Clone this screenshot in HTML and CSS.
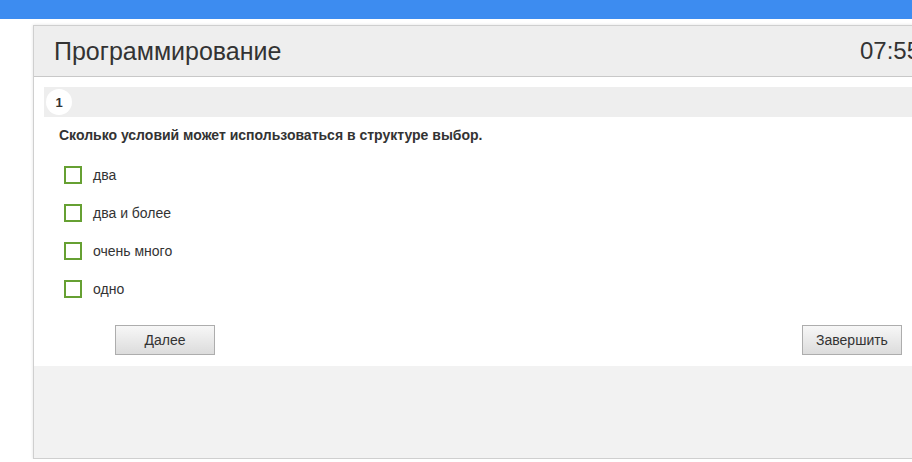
FILE: index.html
```html
<!DOCTYPE html>
<html lang="ru">
<head>
  <meta charset="UTF-8" />
  <title>Программирование</title>
  <link rel="stylesheet" href="styles.css">
</head>
<body>
  <div class="topbar"></div>
  <div class="page">
    <div class="panel">
      <div class="panel-head">
        <h1 class="title">Программирование</h1>
        <span class="timer">07:55</span>
      </div>
      <div class="panel-body">
        <div class="qnum"><span class="qnum-circle">1</span></div>
        <p class="question">Сколько условий может использоваться в структуре выбор.</p>
        <ul class="options">
          <li class="option"><span class="check"></span><span class="label">два</span></li>
          <li class="option"><span class="check"></span><span class="label">два и более</span></li>
          <li class="option"><span class="check"></span><span class="label">очень много</span></li>
          <li class="option"><span class="check"></span><span class="label">одно</span></li>
        </ul>
        <div class="actions">
          <button class="btn">Далее</button>
          <button class="btn btn-finish">Завершить</button>
        </div>
      </div>
      <div class="panel-foot"></div>
    </div>
  </div>
</body>
</html>
```

FILE: styles.css
```css
* {
  box-sizing: border-box;
}
body {
  margin: 0;
  font-family: 'Liberation Sans', Arial, sans-serif;
  color: #333;
  background: #fff;
  overflow: hidden;
}
.topbar {
  height: 19px;
  background: #3d8cf0;
}
.page {
  padding: 6px 0 0 33px;
}
.panel {
  width: 908px;
  border: 1px solid #cfcfcf;
  box-shadow: 0 0 3px rgba(0, 0, 0, 0.12);
  background: #fff;
}
.panel-head {
  height: 51px;
  background: #eee;
  border-bottom: 1px solid #c8c8c8;
  display: flex;
  align-items: center;
  justify-content: space-between;
  padding: 0 20px 0 20px;
}
.title {
  margin: 0;
  font-size: 25px;
  font-weight: normal;
  color: #333;
}
.timer {
  font-size: 24px;
  color: #333;
}
.panel-body {
  padding: 10px 0 11px 10px;
}
.qnum {
  height: 30px;
  background: #eee;
  display: flex;
  align-items: center;
  padding-left: 2px;
}
.qnum-circle {
  width: 26px;
  height: 26px;
  border-radius: 50%;
  background: #fff;
  display: flex;
  align-items: center;
  justify-content: center;
  font-size: 13px;
  font-weight: bold;
  color: #333;
}
.question {
  margin: 9px 0 0 15px;
  font-size: 14px;
  line-height: 18px;
  font-weight: bold;
}
.options {
  list-style: none;
  margin: 12px 0 0 0;
  padding: 0;
}
.option {
  height: 38px;
  display: flex;
  align-items: center;
  padding-left: 20px;
}
.check {
  width: 18px;
  height: 18px;
  border: 2px solid #66a032;
  background: #fff;
}
.label {
  margin-left: 11px;
  font-size: 14px;
}
.actions {
  display: flex;
  justify-content: space-between;
  margin-top: 17px;
  padding: 0 38px 0 71px;
}
.btn {
  width: 100px;
  height: 30px;
  border: 1px solid #adadad;
  background: linear-gradient(#f7f7f7, #dcdcdc);
  font-family: 'Liberation Sans', Arial, sans-serif;
  font-size: 14px;
  color: #333;
  cursor: pointer;
}
.panel-foot {
  height: 92px;
  background: #f2f2f2;
}
```
